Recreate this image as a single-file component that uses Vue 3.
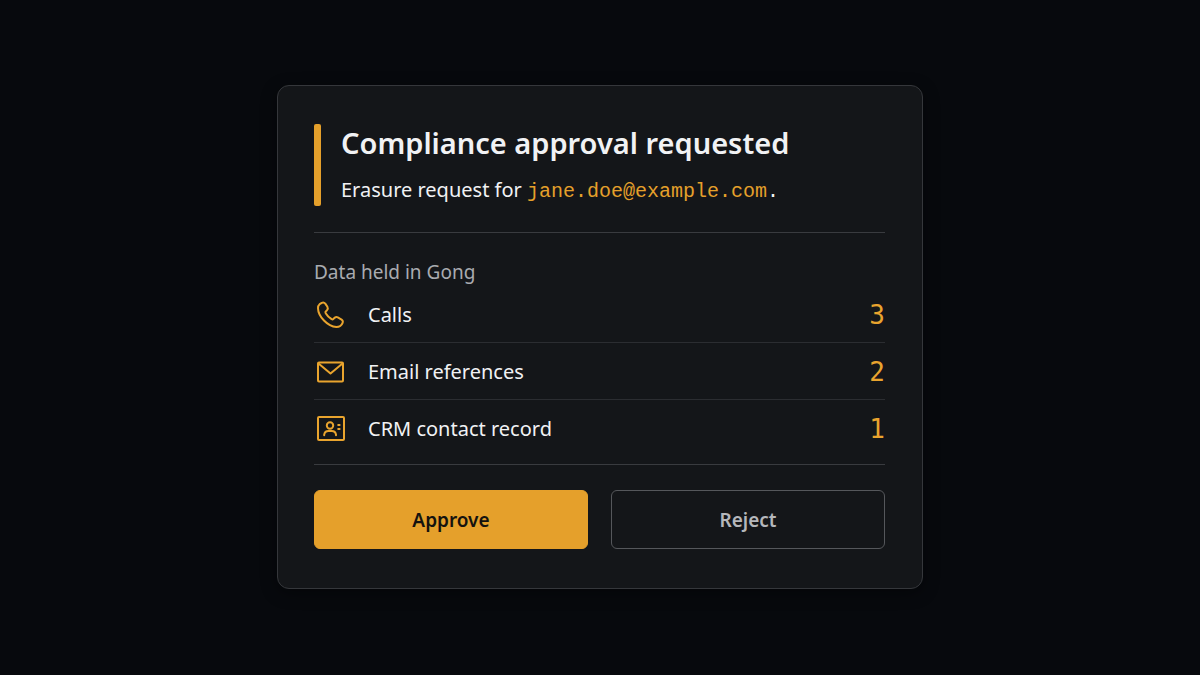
<script setup>
const records = [
  { id: 'calls', label: 'Calls', count: 3 },
  { id: 'emails', label: 'Email references', count: 2 },
  { id: 'crm', label: 'CRM contact record', count: 1 },
]
</script>

<template>
  <main class="page">
    <article class="card">
      <header class="head">
        <span class="accent"></span>
        <div class="intro">
          <h1>Compliance approval requested</h1>
          <p>Erasure request for <span class="email">jane.doe@example.com</span><span class="stop">.</span></p>
        </div>
      </header>

      <section class="data">
        <h2>Data held in Gong</h2>
        <ul>
          <li v-for="record in records" :key="record.id">
            <svg class="icon" viewBox="0 0 32 32" aria-hidden="true">
              <path
                v-if="record.id === 'calls'"
                d="M5.6 5.2 L7.8 3.8 Q9.8 2.8 11.3 4.6 L13.4 7.8 Q14.4 9.6 13 11.2 L11.6 12.6 Q11.2 13.3 11.7 14.2 Q13.8 17.8 17.6 20.2 Q18.6 20.7 19.3 20 L20.9 18.6 Q22.2 17.6 23.8 18.4 L27.6 20.6 Q29.4 21.8 28.6 23.8 Q27 28 22.4 28 C13.6 27.4 4.2 17.6 4 9.2 Q4 6.6 5.6 5.2 Z"
              />
              <g v-else-if="record.id === 'emails'">
                <rect x="4" y="6.5" width="25" height="19" rx="1" />
                <path d="M4.5 7.5 L16.5 17.5 L28.5 7.5" />
              </g>
              <g v-else>
                <rect x="4" y="4" width="26" height="23" rx="1" />
                <circle cx="16" cy="12.5" r="3.2" />
                <path d="M10.2 22.3 V21.7 Q10.8 18.1 14.4 18.1 H17.8 Q21.4 18.1 22 21.7 V22.3" />
                <path d="M24.2 12 H25.6 M24.2 16 H25.6" />
              </g>
            </svg>
            <span class="name">{{ record.label }}</span>
            <span class="count">{{ record.count }}</span>
          </li>
        </ul>
      </section>

      <footer class="actions">
        <button type="button" class="approve">Approve</button>
        <button type="button" class="reject">Reject</button>
      </footer>
    </article>
  </main>
</template>

<style>
body {
  background: #07090d;
}
</style>

<style scoped>
.page {
  box-sizing: border-box;
  min-height: 100vh;
  display: flex;
  align-items: center;
  justify-content: center;
  padding: 24px 24px 25px;
  background: #07090d;
  color: #f1f2f4;
  font-family: "Noto Sans", "Liberation Sans", sans-serif;
  font-size: 20px;
  line-height: 28px;
}

.card {
  box-sizing: border-box;
  width: 100%;
  max-width: 646px;
  padding: 38px 37px 39px 36px;
  border: 1px solid #35373b;
  border-radius: 12px;
  background: #141619;
  box-shadow: 0 4px 16px rgba(0, 0, 0, 0.4);
}

.head {
  display: flex;
  gap: 20px;
  padding-bottom: 26px;
  border-bottom: 1px solid #393b3f;
}

.accent {
  flex: none;
  width: 7px;
  border-radius: 2px;
  background: #e5a02b;
}

h1,
h2,
p,
ul {
  margin: 0;
  padding: 0;
}

h1 {
  font-size: 29px;
  font-weight: 600;
  line-height: 38px;
}

p {
  padding: 14px 0 2px;
}

.email,
.stop {
  font-family: "Liberation Mono", monospace;
  line-height: 20px;
}

.email {
  color: #e5a02b;
}

h2 {
  padding: 25px 0 0;
  color: #a9abb0;
  font-size: 19px;
  font-weight: 400;
}

ul {
  list-style: none;
}

li {
  display: flex;
  align-items: center;
  height: 54px;
  padding-top: 2px;
}

li + li {
  border-top: 1px solid #2b2d31;
}

.icon {
  width: 32px;
  height: 32px;
  margin-right: 22px;
  fill: none;
  stroke: #e9a42e;
  stroke-width: 2;
  stroke-linecap: round;
  stroke-linejoin: round;
}

.name {
  flex: 1;
}

.count {
  color: #e9a42e;
  font-family: "DejaVu Sans Mono", monospace;
  font-size: 26px;
}

.actions {
  display: grid;
  grid-template-columns: 1fr 1fr;
  gap: 23px;
  margin-top: 8px;
  padding-top: 25px;
  border-top: 1px solid #393b3f;
}

button {
  height: 59px;
  border: 1px solid #e5a02b;
  border-radius: 6px;
  font: inherit;
  font-size: 19px;
  font-weight: 600;
  cursor: pointer;
}

.approve {
  background: #e5a02b;
  color: #15130f;
}

.reject {
  border-color: #55575b;
  background: transparent;
  color: #b5b7bb;
}
</style>
